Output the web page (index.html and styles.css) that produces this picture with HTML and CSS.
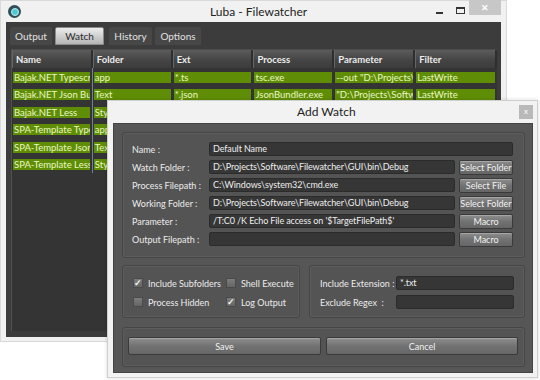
FILE: index.html
```html
<!DOCTYPE html>
<html>
<head>
<meta charset="utf-8">
<link rel="stylesheet" href="styles.css">
</head>
<body>
<div class="desktop">
  <div class="win main">
    <div class="titlebar">
      <span class="app-icon"><span class="app-icon-core"></span></span>
      <span class="win-title">Luba - Filewatcher</span>
      <div class="wbtns">
        <span class="wbtn-min"></span>
        <span class="wbtn-max"></span>
        <span class="wbtn-close">✕</span>
      </div>
    </div>
    <div class="client">
      <div class="tabs">
        <span class="tab">Output</span>
        <span class="tab tab-active">Watch</span>
        <span class="tab">History</span>
        <span class="tab">Options</span>
      </div>
      <div class="grid">
        <div class="grow head">
          <span class="hc c1">Name</span>
          <span class="hc c2">Folder</span>
          <span class="hc c3">Ext</span>
          <span class="hc c4">Process</span>
          <span class="hc c5">Parameter</span>
          <span class="hc c6">Filter</span>
        </div>
        <div class="grow">
          <span class="cell c1"><span class="g">Bajak.NET Typescript</span></span>
          <span class="cell c2"><span class="g">app</span></span>
          <span class="cell c3"><span class="g">*.ts</span></span>
          <span class="cell c4"><span class="g">tsc.exe</span></span>
          <span class="cell c5"><span class="g">--out "D:\Projects\Software</span></span>
          <span class="cell c6"><span class="g">LastWrite</span></span>
        </div>
        <div class="grow">
          <span class="cell c1"><span class="g">Bajak.NET Json Bundler</span></span>
          <span class="cell c2"><span class="g">Text</span></span>
          <span class="cell c3"><span class="g">*.json</span></span>
          <span class="cell c4"><span class="g">JsonBundler.exe</span></span>
          <span class="cell c5"><span class="g">"D:\Projects\Software</span></span>
          <span class="cell c6"><span class="g">LastWrite</span></span>
        </div>
        <div class="grow">
          <span class="cell c1"><span class="g">Bajak.NET Less</span></span>
          <span class="cell c2"><span class="g">Styles</span></span>
          <span class="cell c3"><span class="g">*.less</span></span>
          <span class="cell c4"><span class="g">lessc.exe</span></span>
          <span class="cell c5"><span class="g">x</span></span>
          <span class="cell c6"><span class="g">LastWrite</span></span>
        </div>
        <div class="grow">
          <span class="cell c1"><span class="g">SPA-Template Typescript</span></span>
          <span class="cell c2"><span class="g">app</span></span>
          <span class="cell c3"><span class="g">*.ts</span></span>
          <span class="cell c4"><span class="g">tsc.exe</span></span>
          <span class="cell c5"><span class="g">x</span></span>
          <span class="cell c6"><span class="g">LastWrite</span></span>
        </div>
        <div class="grow">
          <span class="cell c1"><span class="g">SPA-Template Json</span></span>
          <span class="cell c2"><span class="g">Text</span></span>
          <span class="cell c3"><span class="g">*.json</span></span>
          <span class="cell c4"><span class="g">x</span></span>
          <span class="cell c5"><span class="g">x</span></span>
          <span class="cell c6"><span class="g">LastWrite</span></span>
        </div>
        <div class="grow">
          <span class="cell c1"><span class="g">SPA-Template Less</span></span>
          <span class="cell c2"><span class="g">Styles</span></span>
          <span class="cell c3"><span class="g">*.less</span></span>
          <span class="cell c4"><span class="g">x</span></span>
          <span class="cell c5"><span class="g">x</span></span>
          <span class="cell c6"><span class="g">LastWrite</span></span>
        </div>
      </div>
    </div>
  </div>

  <div class="win dialog">
    <div class="dlg-titlebar">
      <span class="dlg-title">Add Watch</span>
      <span class="dlg-close">x</span>
    </div>
    <div class="dlg-client">
      <div class="group fields">
        <div class="frow">
          <span class="lbl">Name :</span>
          <span class="input">Default Name</span>
        </div>
        <div class="frow">
          <span class="lbl">Watch Folder :</span>
          <span class="input">D:\Projects\Software\Filewatcher\GUI\bin\Debug</span>
          <span class="btn">Select Folder</span>
        </div>
        <div class="frow">
          <span class="lbl">Process Filepath :</span>
          <span class="input">C:\Windows\system32\cmd.exe</span>
          <span class="btn">Select File</span>
        </div>
        <div class="frow">
          <span class="lbl">Working Folder :</span>
          <span class="input">D:\Projects\Software\Filewatcher\GUI\bin\Debug</span>
          <span class="btn">Select Folder</span>
        </div>
        <div class="frow">
          <span class="lbl">Parameter :</span>
          <span class="input">/T:C0 /K Echo File access on '$TargetFilePath$'</span>
          <span class="btn">Macro</span>
        </div>
        <div class="frow">
          <span class="lbl">Output Filepath :</span>
          <span class="input"></span>
          <span class="btn">Macro</span>
        </div>
      </div>
      <div class="mid">
        <div class="group checks">
          <label class="chk"><span class="box on">✓</span>Include Subfolders</label>
          <label class="chk"><span class="box"></span>Shell Execute</label>
          <label class="chk"><span class="box"></span>Process Hidden</label>
          <label class="chk"><span class="box on">✓</span>Log Output</label>
        </div>
        <div class="group ext">
          <div class="erow">
            <span class="elbl">Include Extension :</span>
            <span class="input">*.txt</span>
          </div>
          <div class="erow">
            <span class="elbl">Exclude Regex&nbsp; :</span>
            <span class="input"></span>
          </div>
        </div>
      </div>
      <div class="group actions">
        <span class="btn big">Save</span>
        <span class="btn big">Cancel</span>
      </div>
    </div>
  </div>
</div>
</body>
</html>
```

FILE: styles.css
```css
* { box-sizing: border-box; }
html, body { margin: 0; padding: 0; background: #ffffff; }
body { font-family: "Lato", "Open Sans", sans-serif; }

.desktop {
  position: relative;
  width: 540px;
  height: 380px;
  overflow: hidden;
  background: #ffffff;
}

/* ---------- main window ---------- */
.main {
  width: 507px;
  height: 342px;
  background: #f1f1f1;
  border: 1px solid #d9d9d9;
  display: flex;
  flex-direction: column;
}
.titlebar {
  height: 21px;
  display: flex;
  align-items: center;
  position: relative;
}
.app-icon {
  width: 13px;
  height: 13px;
  border-radius: 50%;
  background: #2f4f56;
  margin-left: 7px;
  display: flex;
  align-items: center;
  justify-content: center;
}
.app-icon-core {
  width: 8px;
  height: 8px;
  border-radius: 50%;
  background: #4fc8d6;
  border: 1px solid #bdf0f4;
}
.win-title {
  position: absolute;
  left: 209px;
  top: 3px;
  font-size: 12px;
  color: #222;
}
.wbtns {
  margin-left: auto;
  margin-right: 5px;
  align-self: flex-start;
  display: flex;
  align-items: flex-start;
}
.wbtn-min {
  width: 7px;
  height: 2px;
  background: #333;
  margin-top: 11px;
  margin-right: 13px;
}
.wbtn-max {
  width: 9px;
  height: 7px;
  border: 1px solid #333;
  border-top-width: 2px;
  margin-top: 6px;
  margin-right: 4px;
}
.wbtn-close {
  width: 32px;
  height: 15px;
  background: #c7c7c7;
  color: #fff;
  font-size: 9px;
  font-weight: bold;
  display: flex;
  align-items: center;
  justify-content: center;
  margin-top: -1px;
}
.client {
  flex: 1;
  margin: 0 5px 4px 5px;
  background: #3c3c3c;
  padding: 5px 4px 6px 4px;
  display: flex;
  flex-direction: column;
}
.tabs {
  display: flex;
  gap: 3px;
  height: 18px;
}
.tab {
  background: #474747;
  color: #e2e2e2;
  font-size: 10px;
  display: flex;
  align-items: center;
  justify-content: center;
  border-radius: 2px 2px 0 0;
}
.tab:nth-child(1) { width: 42px; }
.tab:nth-child(2) { width: 49px; }
.tab:nth-child(3) { width: 43px; margin-left: 2px; }
.tab:nth-child(4) { width: 46px; }
.tab-active {
  background: linear-gradient(#ececec, #b4b4b4);
  color: #2a2a2a;
  border: 1px solid #8a8a8a;
}
.grid {
  flex: 1;
  margin-top: 4px;
  margin-left: 1px;
  background: #343434;
  border-left: 1px solid #505050;
  border-top: 1px solid #4a4a4a;
}
.grow {
  display: flex;
  height: 17.5px;
  align-items: center;
}
.grow.head {
  height: 18px;
  align-items: stretch;
}
.c1 { width: 81px; }
.c2 { width: 80px; }
.c3 { width: 81px; }
.c4 { width: 81px; }
.c5 { width: 81px; }
.c6 { width: 82px; }
.hc {
  background: linear-gradient(#5c5c5c, #454545 55%, #3c3c3c);
  border-right: 2px solid #2e2e2e;
  border-left: 1px solid #666;
  color: #ececec;
  font-weight: bold;
  font-size: 9.5px;
  padding-left: 3px;
  display: flex;
  align-items: center;
}
.cell {
  height: 17.5px;
  display: flex;
  align-items: center;
  padding: 0 2px 0 1px;
  overflow: hidden;
}
.cell.c1 { border-right: 1px solid #708098; }
.g {
  display: block;
  width: 100%;
  height: 11px;
  margin-top: 1px;
  background: #5f8e06;
  color: #eaf7c4;
  font-size: 9.5px;
  line-height: 11px;
  white-space: nowrap;
  overflow: hidden;
  padding-left: 1px;
}

/* ---------- dialog ---------- */
.dialog {
  position: absolute;
  left: 107px;
  top: 100px;
  width: 431px;
  height: 278px;
  background: #f2f2f2;
  border: 1px solid #cfcfcf;
  box-shadow: 0 0 4px rgba(0,0,0,0.15);
  display: flex;
  flex-direction: column;
}
.dlg-titlebar {
  height: 22px;
  position: relative;
}
.dlg-title {
  position: absolute;
  left: 189px;
  top: 3px;
  font-size: 12px;
  color: #222;
}
.dlg-close {
  position: absolute;
  right: 4px;
  top: 4px;
  width: 14px;
  height: 14px;
  background: #b9b9b9;
  color: #fff;
  font-size: 8px;
  line-height: 13px;
  text-align: center;
}
.dlg-client {
  flex: 1;
  margin: 0 4px 4px 5px;
  background: #565656;
  border: 1px solid #444;
  padding: 8px 7px 5px 8px;
  display: flex;
  flex-direction: column;
}
.group {
  background: #545454;
  border: 1px solid #464646;
  border-radius: 3px;
  box-shadow: inset 0 0 0 1px #5d5d5d;
}
.fields {
  height: 126px;
  padding: 9px 11px 0 9px;
  display: flex;
  flex-direction: column;
  gap: 4px;
}
.frow {
  display: flex;
  height: 14px;
  align-items: center;
}
.lbl {
  width: 77px;
  flex: none;
  color: #ececec;
  font-size: 9px;
  white-space: nowrap;
}
.input {
  flex: 1;
  height: 14px;
  background: #363636;
  border: 1px solid #2b2b2b;
  border-radius: 2px;
  color: #ededed;
  font-size: 9px;
  letter-spacing: -0.1px;
  line-height: 12px;
  padding-left: 3px;
  white-space: nowrap;
  overflow: hidden;
}
.btn {
  flex: none;
  width: 54px;
  height: 15px;
  margin-left: 4px;
  background: linear-gradient(#8e8e8e, #727272 50%, #666);
  border: 1px solid #3a3a3a;
  border-radius: 2px;
  color: #f2f2f2;
  font-size: 9px;
  white-space: nowrap;
  display: flex;
  align-items: center;
  justify-content: center;
  box-shadow: inset 0 1px 0 #a5a5a5;
}
.mid {
  display: flex;
  gap: 9px;
  margin-top: 7px;
  height: 53px;
}
.checks {
  width: 178px;
  padding: 12px 0 0 10px;
  display: grid;
  grid-template-columns: 93px 1fr;
  grid-auto-rows: 19px;
  align-content: start;
}
.chk {
  display: flex;
  align-items: flex-start;
  color: #ececec;
  font-size: 9px;
  line-height: 11px;
  white-space: nowrap;
}
.box {
  width: 10px;
  height: 10px;
  margin-right: 5px;
  background: linear-gradient(#7c7c7c, #656565);
  border: 1px solid #4a4a4a;
  color: #f4f4f4;
  font-size: 9px;
  line-height: 8px;
  text-align: center;
  font-weight: bold;
}
.ext {
  flex: 1;
  padding: 10px 10px 0 10px;
  display: flex;
  flex-direction: column;
  gap: 5px;
}
.erow {
  display: flex;
  height: 14px;
  align-items: center;
}
.elbl {
  width: 76px;
  flex: none;
  color: #ececec;
  font-size: 9px;
  white-space: nowrap;
}
.actions {
  margin-top: 9px;
  height: 40px;
  padding: 9px 6px 0 5px;
  display: flex;
  gap: 5px;
}
.btn.big {
  flex: none;
  height: 18px;
  margin-left: 0;
}
.btn.big:first-child { width: 193px; }
.btn.big:last-child { width: 192px; }
```
